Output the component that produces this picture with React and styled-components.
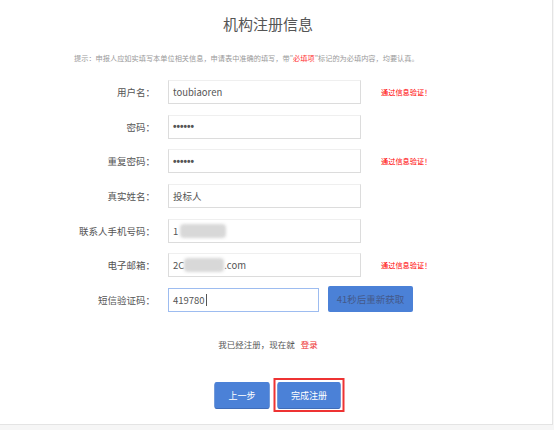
import React from 'react';
import styled, { createGlobalStyle } from 'styled-components';

const GlobalStyle = createGlobalStyle`
    html, body {
        margin: 0;
        padding: 0;
        background: #f6f6f6;
    }
    body {
        font-family: "Noto Sans CJK SC", "Noto Sans", sans-serif;
        color: #555;
    }
`;

const Page = styled.div`
    width: 553px;
    height: 425px;
    background: #fff;
    border-right: 1px solid #e4e4e4;
    border-bottom: 1px solid #e4e4e4;
    box-sizing: border-box;
    display: flex;
    flex-direction: column;
`;

const Title = styled.h1`
    margin: 14px 0 0;
    text-align: center;
    font-size: 15px;
    line-height: 20px;
    font-weight: 400;
    color: #555;
    transform: translateX(-8px);
`;

const Hint = styled.p`
    margin: 19px 0 0 74px;
    font-size: 7.2px;
    line-height: 10px;
    color: #999;
    white-space: nowrap;
`;

const Em = styled.span`
    color: #f33;
`;

const Form = styled.div`
    margin-top: 17px;
    display: grid;
    grid-template-columns: 155px 193px 1fr;
    column-gap: 13px;
    row-gap: 10.7px;
    align-items: center;
`;

const Label = styled.div`
    text-align: right;
    font-size: 9.5px;
    color: #555;
    white-space: nowrap;
`;

const Field = styled.div`
    height: 24px;
    box-sizing: border-box;
    border: 1px solid ${p => (p.$focus ? '#9dbcf0' : '#dcdcdc')};
    border-top-color: ${p => (p.$focus ? '#9dbcf0' : '#efefef')};
    padding: 0 4px;
    display: flex;
    align-items: center;
    font-family: ${p => (p.$dots ? '"Liberation Sans", sans-serif' : 'inherit')};
    font-weight: ${p => (p.$dots ? 700 : 400)};
    font-size: ${p => (p.$dots ? '10px' : '9.5px')};
    color: #555;
    width: ${p => p.$width || 'auto'};
    white-space: nowrap;
`;

const Caret = styled.span`
    display: inline-block;
    width: 1px;
    height: 12px;
    background: #555;
    margin-left: 1px;
`;

const Redact = styled.span`
    display: inline-block;
    width: ${p => p.$w}px;
    height: 14px;
    background: #d8d8d8;
    border-radius: 4px;
    filter: blur(1.5px);
`;

const Note = styled.div`
    margin-left: 7px;
    font-size: 7.2px;
    color: #f00;
    white-space: nowrap;
`;

const SmsCell = styled.div`
    grid-column: span 2;
    display: flex;
    align-items: center;
    gap: 9px;
`;

const CodeButton = styled.button`
    width: 85px;
    height: 26px;
    border: none;
    border-radius: 2px;
    background: #4b81d7;
    color: #44598a;
    font-family: inherit;
    font-size: 9.5px;
    padding: 0;
    flex-shrink: 0;
    margin-top: -2px;
`;

const LoginLine = styled.div`
    margin-top: 26px;
    text-align: center;
    font-size: 8.5px;
    color: #555;
    transform: translateX(-8px);
`;

const LoginLink = styled.a`
    color: #e33;
    margin-left: 6px;
    text-decoration: none;
`;

const Actions = styled.div`
    margin-top: 28px;
    display: flex;
    justify-content: center;
    align-items: center;
    transform: translateX(1.5px);
`;

const Outline = styled.div`
    padding: 2px;
    border: 2px solid ${p => (p.$on ? '#ee3333' : 'transparent')};
`;

const Button = styled.button`
    display: block;
    width: ${p => p.$w}px;
    height: 26px;
    border: none;
    border-radius: 2px;
    background: #4b81d7;
    box-shadow: 0 1px 0 #3f6cb8;
    color: #fff;
    font-family: inherit;
    font-size: 9px;
    padding: 0;
`;

const rows = [
    { label: '用户名', value: 'toubiaoren', note: true },
    { label: '密码', value: '••••••', dots: true },
    { label: '重复密码', value: '••••••', dots: true, note: true },
    { label: '真实姓名', value: '投标人' },
    { label: '联系人手机号码', value: <>1<Redact $w={46} style={{ marginLeft: 2 }} /></> },
    { label: '电子邮箱', value: <>2C<Redact $w={40} />.com</>, note: true },
];

export default function App() {
    return (
        <>
            <GlobalStyle />
            <Page>
                <Title>机构注册信息</Title>
                <Hint>
                    提示：申报人应如实填写本单位相关信息，申请表中准确的填写，带"<Em>必填项</Em>"标记的为必填内容，均要认真。
                </Hint>
                <Form>
                    {rows.map(r => (
                        <React.Fragment key={r.label}>
                            <Label>{r.label}：</Label>
                            <Field $dots={r.dots}>{r.value}</Field>
                            {r.note ? <Note>通过信息验证！</Note> : <div />}
                        </React.Fragment>
                    ))}
                    <Label>短信验证码：</Label>
                    <SmsCell>
                        <Field $focus $width="151px">419780<Caret /></Field>
                        <CodeButton>41秒后重新获取</CodeButton>
                    </SmsCell>
                </Form>
                <LoginLine>
                    我已经注册，现在就<LoginLink href="#">登录</LoginLink>
                </LoginLine>
                <Actions>
                    <Outline>
                        <Button $w={55}>上一步</Button>
                    </Outline>
                    <Outline $on>
                        <Button $w={63}>完成注册</Button>
                    </Outline>
                </Actions>
            </Page>
        </>
    );
}
